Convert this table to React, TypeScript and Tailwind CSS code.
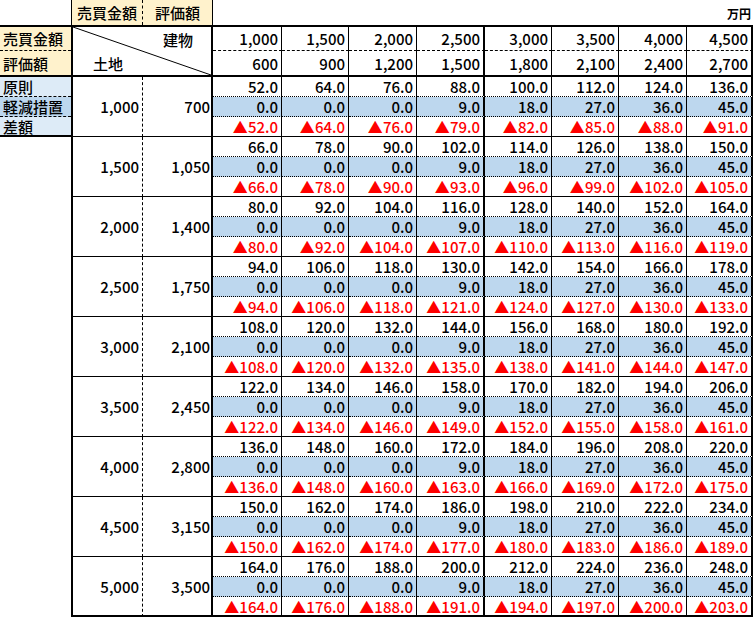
import React from "react";

const buildings = [1000, 1500, 2000, 2500, 3000, 3500, 4000, 4500];
const lands = [1000, 1500, 2000, 2500, 3000, 3500, 4000, 4500, 5000];

const fmtInt = (n: number) => n.toLocaleString("en-US");
const f1 = (n: number) => (Math.round(n * 10) / 10).toFixed(1);

const rightBorder = (j: number) =>
  j === 3 || j === 7 ? "[border-right:2px_solid_#000]" : "[border-right:1px_solid_#000]";

const NUM = "flex items-center justify-end pr-[3px] leading-none whitespace-nowrap";

export default function App() {
  const cells: React.ReactNode[] = [];

  // Row 0
  cells.push(<div key="r0-empty" />);
  cells.push(
    <div
      key="r0-a"
      className="flex items-center justify-center bg-[#FFF2CC] leading-none [border-left:1px_solid_#000] [border-right:1px_dashed_#000]"
    >
      売買金額
    </div>
  );
  cells.push(
    <div
      key="r0-b"
      className="flex items-center justify-center bg-[#FFF2CC] leading-none [border-right:1px_solid_#000]"
    >
      評価額
    </div>
  );
  cells.push(<div key="r0-gap" className="col-span-7" />);
  cells.push(
    <div key="r0-unit" className="flex items-center justify-end pr-[2px] pt-[3px] text-[12px] font-bold leading-none">
      万円
    </div>
  );

  // Row 1
  cells.push(
    <div
      key="lg-1"
      className="flex items-center pl-[3px] bg-[#FFF2CC] leading-none [border-top:2px_solid_#000] [border-bottom:1px_dashed_#000]"
    >
      売買金額
    </div>
  );
  cells.push(
    <div
      key="diag"
      className="relative col-span-2 row-span-2 flex flex-col [border-top:2px_solid_#000] [border-left:2px_solid_#000] [border-right:2px_solid_#000] [border-bottom:2px_solid_#000]"
    >
      <svg className="absolute inset-0 h-full w-full" preserveAspectRatio="none">
        <line x1="0" y1="0" x2="100%" y2="100%" stroke="#000" strokeWidth="1" />
      </svg>
      <div className="flex flex-1 items-center justify-end pr-[18px] leading-none">建物</div>
      <div className="flex flex-1 items-center justify-start pl-[20px] leading-none">土地</div>
    </div>
  );
  buildings.forEach((b, j) => {
    cells.push(
      <div
        key={`h1-${j}`}
        className={`${NUM} [border-top:2px_solid_#000] [border-bottom:1px_dashed_#000] ${rightBorder(j)}`}
      >
        {fmtInt(b)}
      </div>
    );
  });

  // Row 2
  cells.push(
    <div
      key="lg-2"
      className="flex items-center pl-[3px] bg-[#FFF2CC] leading-none [border-bottom:2px_solid_#000]"
    >
      評価額
    </div>
  );
  buildings.forEach((b, j) => {
    cells.push(
      <div key={`h2-${j}`} className={`${NUM} [border-bottom:2px_solid_#000] ${rightBorder(j)}`}>
        {fmtInt(Math.round(b * 0.6))}
      </div>
    );
  });

  // Blocks
  lands.forEach((l, i) => {
    const last = i === lands.length - 1;
    const la = Math.round(l * 0.7);
    const blockBottom = last ? "[border-bottom:2px_solid_#000]" : "[border-bottom:1px_solid_#000]";

    if (i === 0) {
      cells.push(
        <div
          key={`lg-${i}-0`}
          className="flex items-center pl-[3px] bg-[#DDEBF7] leading-none [border-bottom:1px_dashed_#000]"
        >
          原則
        </div>
      );
    } else {
      cells.push(<div key={`lg-${i}-0`} />);
    }
    cells.push(
      <div
        key={`a-${i}`}
        className={`row-span-3 ${NUM} [border-left:2px_solid_#000] [border-right:1px_dashed_#000] ${blockBottom}`}
      >
        {fmtInt(l)}
      </div>
    );
    cells.push(
      <div
        key={`b-${i}`}
        className={`row-span-3 flex items-center justify-end pr-[1px] leading-none [border-right:2px_solid_#000] ${blockBottom}`}
      >
        {fmtInt(la)}
      </div>
    );
    buildings.forEach((b, j) => {
      const ba = Math.round(b * 0.6);
      const gen = 0.04 * (ba + la);
      cells.push(
        <div key={`d0-${i}-${j}`} className={`${NUM} [border-bottom:1px_dotted_#000] ${rightBorder(j)}`}>
          {f1(gen)}
        </div>
      );
    });

    if (i === 0) {
      cells.push(
        <div
          key={`lg-${i}-1`}
          className="flex items-center pl-[3px] bg-[#BDD7EE] leading-none [border-bottom:1px_dashed_#000]"
        >
          軽減措置
        </div>
      );
    } else {
      cells.push(<div key={`lg-${i}-1`} />);
    }
    buildings.forEach((b, j) => {
      const ba = Math.round(b * 0.6);
      const red = Math.max(0, 0.03 * (ba - 1200));
      cells.push(
        <div
          key={`d1-${i}-${j}`}
          className={`${NUM} bg-[#BDD7EE] [border-bottom:1px_dotted_#000] ${rightBorder(j)}`}
        >
          {f1(red)}
        </div>
      );
    });

    if (i === 0) {
      cells.push(
        <div
          key={`lg-${i}-2`}
          className="flex items-center pl-[3px] bg-[#DDEBF7] leading-none [border-bottom:2px_solid_#000]"
        >
          差額
        </div>
      );
    } else {
      cells.push(<div key={`lg-${i}-2`} />);
    }
    buildings.forEach((b, j) => {
      const ba = Math.round(b * 0.6);
      const gen = 0.04 * (ba + la);
      const red = Math.max(0, 0.03 * (ba - 1200));
      cells.push(
        <div
          key={`d2-${i}-${j}`}
          className={`${NUM} text-[#FF0000] ${blockBottom} ${rightBorder(j)}`}
        >
          ▲{f1(gen - red)}
        </div>
      );
    });
  });

  return (
    <div className="h-[618px] w-[755px] overflow-hidden bg-white text-[15px] font-medium text-black font-['Noto_Sans_CJK_JP','Noto_Sans',sans-serif]">
      <div className="grid grid-cols-[71px_72px_70px_69px_67px_68px_68px_67px_67px_68px_66px] grid-rows-[25px_26px_26px_repeat(27,20px)]">
        {cells}
      </div>
    </div>
  );
}
